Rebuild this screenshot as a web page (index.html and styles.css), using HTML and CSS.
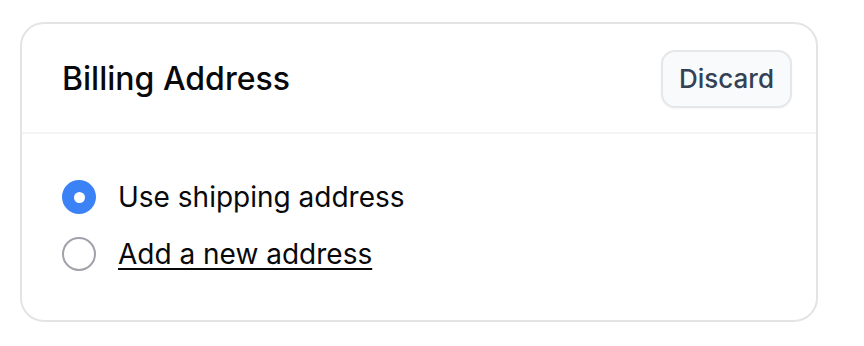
FILE: index.html
```html
<!DOCTYPE html>
<html>
<head>
<meta charset="utf-8">
<link rel="stylesheet" href="styles.css">
</head>
<body>
<div class="page">
  <section class="card">
    <header class="card-header">
      <h2 class="title">Billing Address</h2>
      <button class="btn">Discard</button>
    </header>
    <div class="card-body">
      <label class="option">
        <span class="radio checked"></span>
        <span class="label">Use shipping address</span>
      </label>
      <label class="option">
        <span class="radio"></span>
        <span class="label link">Add a new address</span>
      </label>
    </div>
  </section>
</div>
</body>
</html>
```

FILE: styles.css
```css
* { box-sizing: border-box; }
html, body { margin: 0; padding: 0; background: #ffffff; }
body { font-family: Inter, "Noto Sans", sans-serif; color: #09090b; }
.page { padding: 22px 46px 0 20px; }
.card {
  width: 798px;
  height: 300px;
  border: 2px solid #e4e4e7;
  border-radius: 24px;
  background: #fff;
}
.card-header {
  height: 110px;
  display: flex;
  align-items: center;
  justify-content: space-between;
  padding: 1px 24px 0 40px;
  border-bottom: 2px solid #f4f4f5;
}
.title {
  margin: 0;
  font-size: 32px;
  font-weight: 500;
  color: #09090b;
}
.btn {
  font-family: Inter, "Noto Sans", sans-serif;
  width: 131px;
  height: 58px;
  font-size: 26px;
  font-weight: 500;
  color: #334155;
  background: #f9fafb;
  border: 2px solid #e5e7eb;
  border-radius: 14px;
  box-shadow: 0 1px 2px rgba(0,0,0,0.04);
  padding: 0;
}
.card-body {
  padding: 46px 40px 0 40px;
  display: flex;
  flex-direction: column;
  gap: 23px;
}
.option {
  display: flex;
  align-items: center;
  gap: 22px;
  height: 34px;
}
.radio {
  width: 34px;
  height: 34px;
  border-radius: 50%;
  border: 2px solid #a1a1aa;
  flex: none;
  display: flex;
  align-items: center;
  justify-content: center;
}
.radio.checked {
  border: none;
  background: #3b82f6;
}
.radio.checked::after {
  content: "";
  width: 11px;
  height: 11px;
  border-radius: 50%;
  background: #fff;
}
.label {
  font-size: 28px;
  font-weight: 400;
  color: #09090b;
}
.link {
  text-decoration: underline;
  text-underline-offset: 4px;
  text-decoration-thickness: 2px;
}
```
